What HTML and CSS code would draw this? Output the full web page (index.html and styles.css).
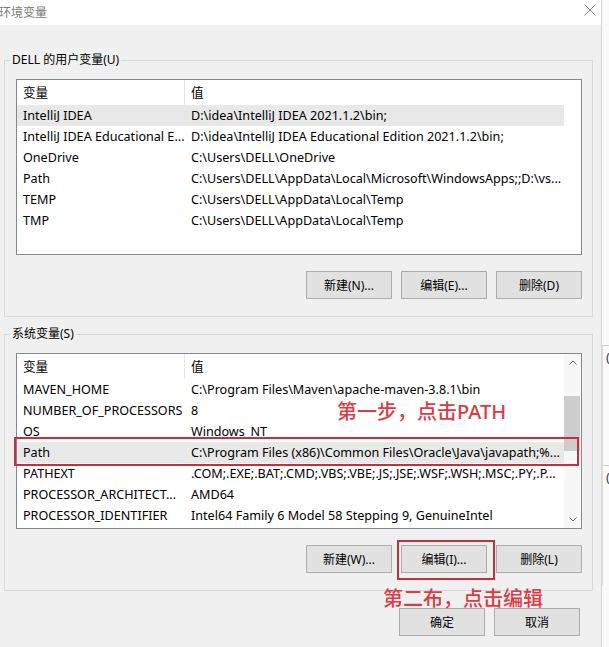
FILE: index.html
```html
<!DOCTYPE html>
<html lang="zh-CN">
<head>
    <meta charset="UTF-8">
    <meta name="viewport" content="width=device-width, initial-scale=1.0">
    <title>环境变量</title>
    <link rel="stylesheet" href="styles.css">
</head>
<body>
    <div class="screen">
        <div class="dialog">
            <div class="titlebar">
                <span class="title">环境变量</span>
                <svg class="close" width="12" height="12" viewBox="0 0 12 12">
                    <path d="M0.5 0.5 L11.5 11.5 M11.5 0.5 L0.5 11.5" stroke="#8a8a8a" stroke-width="1" fill="none"/>
                </svg>
            </div>

            <div class="dialog-body">
                <fieldset class="group">
                    <legend>DELL 的用户变量(U)</legend>
                    <div class="listview">
                        <div class="list-main">
                            <div class="list-head">
                                <div class="col-name">变量</div>
                                <div class="col-value">值</div>
                            </div>
                            <div class="list-row selected">
                                <div class="col-name">IntelliJ IDEA</div>
                                <div class="col-value">D:\idea\IntelliJ IDEA 2021.1.2\bin;</div>
                            </div>
                            <div class="list-row">
                                <div class="col-name">IntelliJ IDEA Educational E...</div>
                                <div class="col-value">D:\idea\IntelliJ IDEA Educational Edition 2021.1.2\bin;</div>
                            </div>
                            <div class="list-row">
                                <div class="col-name">OneDrive</div>
                                <div class="col-value">C:\Users\DELL\OneDrive</div>
                            </div>
                            <div class="list-row">
                                <div class="col-name">Path</div>
                                <div class="col-value">C:\Users\DELL\AppData\Local\Microsoft\WindowsApps;;D:\vs...</div>
                            </div>
                            <div class="list-row">
                                <div class="col-name">TEMP</div>
                                <div class="col-value">C:\Users\DELL\AppData\Local\Temp</div>
                            </div>
                            <div class="list-row">
                                <div class="col-name">TMP</div>
                                <div class="col-value">C:\Users\DELL\AppData\Local\Temp</div>
                            </div>
                        </div>
                        <div class="scroll-gap"></div>
                    </div>
                    <div class="button-row">
                        <button>新建(N)...</button>
                        <button>编辑(E)...</button>
                        <button>删除(D)</button>
                    </div>
                </fieldset>

                <fieldset class="group">
                    <legend>系统变量(S)</legend>
                    <div class="listview">
                        <div class="list-main">
                            <div class="list-head">
                                <div class="col-name">变量</div>
                                <div class="col-value">值</div>
                            </div>
                            <div class="list-row">
                                <div class="col-name">MAVEN_HOME</div>
                                <div class="col-value">C:\Program Files\Maven\apache-maven-3.8.1\bin</div>
                            </div>
                            <div class="list-row">
                                <div class="col-name">NUMBER_OF_PROCESSORS</div>
                                <div class="col-value">8</div>
                            </div>
                            <div class="list-row">
                                <div class="col-name">OS</div>
                                <div class="col-value">Windows_NT</div>
                            </div>
                            <div class="list-row selected">
                                <div class="col-name">Path</div>
                                <div class="col-value">C:\Program Files (x86)\Common Files\Oracle\Java\javapath;%...</div>
                            </div>
                            <div class="list-row">
                                <div class="col-name">PATHEXT</div>
                                <div class="col-value">.COM;.EXE;.BAT;.CMD;.VBS;.VBE;.JS;.JSE;.WSF;.WSH;.MSC;.PY;.P...</div>
                            </div>
                            <div class="list-row">
                                <div class="col-name">PROCESSOR_ARCHITECT...</div>
                                <div class="col-value">AMD64</div>
                            </div>
                            <div class="list-row">
                                <div class="col-name">PROCESSOR_IDENTIFIER</div>
                                <div class="col-value">Intel64 Family 6 Model 58 Stepping 9, GenuineIntel</div>
                            </div>
                        </div>
                        <div class="scrollbar">
                            <div class="scroll-btn">
                                <svg width="8" height="5" viewBox="0 0 8 5"><path d="M0.5 4.5 L4 1 L7.5 4.5" stroke="#606060" fill="none"/></svg>
                            </div>
                            <div class="scroll-track"><div class="scroll-thumb"></div></div>
                            <div class="scroll-btn">
                                <svg width="8" height="5" viewBox="0 0 8 5"><path d="M0.5 0.5 L4 4 L7.5 0.5" stroke="#606060" fill="none"/></svg>
                            </div>
                        </div>
                    </div>
                    <div class="button-row">
                        <button>新建(W)...</button>
                        <button>编辑(I)...</button>
                        <button>删除(L)</button>
                    </div>
                </fieldset>

                <div class="dialog-buttons">
                    <button>确定</button>
                    <button>取消</button>
                </div>

                <!-- 标注 -->
                <div class="mark mark-path"></div>
                <div class="mark mark-edit"></div>
                <div class="note note-one">第一步，点击PATH</div>
                <div class="note note-two">第二布，点击编辑</div>
            </div>
        </div>
        <div class="side">
            <div class="side-item">(</div>
            <div class="side-item">(</div>
        </div>
    </div>
</body>
</html>
```

FILE: styles.css
```css
* {
    margin: 0;
    padding: 0;
    box-sizing: border-box;
}

body {
    width: 609px;
    height: 647px;
    overflow: hidden;
    background: #f0f0f0;
    font-family: "Noto Sans", "Noto Sans CJK SC", sans-serif;
    font-size: 12px;
    color: #000;
}

.screen {
    display: flex;
    height: 647px;
}

.dialog {
    width: 602px;
    flex: none;
    background: #f0f0f0;
    border-right: 1px solid #d6d6d6;
}

.titlebar {
    height: 25px;
    background: #fff;
    display: flex;
    align-items: center;
    justify-content: space-between;
    padding: 0 5px 2px 0;
}

.title {
    color: #7a7a7a;
    font-size: 12px;
    margin-left: -1px;
}

.close {
    margin-top: -4px;
}

.dialog-body {
    position: relative;
    padding-top: 27px;
}

.group {
    margin-left: 4px;
    width: 589px;
    border: 1px solid #d9d9d9;
    padding: 11px 10px 17px 11px;
    margin-bottom: 9px;
}

.group legend {
    margin-left: -6px;
    padding: 0 2px;
    line-height: 16px;
    font-size: 12px;
}

.listview {
    height: 176px;
    background: #fff;
    border: 1px solid #828790;
    display: flex;
    font-size: 12.6px;
}

.list-main {
    flex: 1;
    min-width: 0;
}

.list-head,
.list-row {
    display: flex;
    white-space: nowrap;
}

.list-head {
    height: 25px;
    line-height: 25px;
}

.list-head .col-name {
    border-right: 1px solid #e5e5e5;
}

.list-row {
    height: 21px;
    line-height: 21px;
}

.list-row.selected {
    background: #e8e8e8;
}

.col-name {
    width: 168px;
    flex: none;
    padding-left: 6px;
    overflow: hidden;
}

.col-value {
    flex: 1;
    padding-left: 6px;
    overflow: hidden;
}

.scroll-gap {
    width: 17px;
    flex: none;
}

.scrollbar {
    width: 17px;
    flex: none;
    background: #f7f7f7;
    display: flex;
    flex-direction: column;
}

.scroll-btn {
    height: 17px;
    display: flex;
    align-items: center;
    justify-content: center;
}

.scroll-track {
    flex: 1;
    padding: 25px 1px 0 0;
}

.scroll-thumb {
    height: 55px;
    background: #cdcdcd;
}

.button-row,
.dialog-buttons {
    display: flex;
    justify-content: flex-end;
    gap: 9px;
}

.button-row {
    margin-top: 16px;
}

.dialog-buttons {
    margin-top: 17px;
    padding-right: 21px;
}

button {
    width: 86px;
    height: 28px;
    background: #e1e1e1;
    border: 1px solid #adadad;
    font-family: "Noto Sans", "Noto Sans CJK SC", sans-serif;
    font-size: 12px;
    color: #000;
}

.mark {
    position: absolute;
    border: 2px solid #c4313b;
}

.mark-path {
    left: 14px;
    top: 412px;
    width: 565px;
    height: 29px;
}

.mark-edit {
    left: 397px;
    top: 515px;
    width: 98px;
    height: 40px;
}

.note {
    position: absolute;
    color: #dd3a44;
    font-size: 20px;
    font-weight: 500;
    line-height: 26px;
    white-space: nowrap;
}

.note-one {
    left: 337px;
    top: 374px;
}

.note-two {
    left: 383px;
    top: 561px;
}

.side {
    flex: 1;
    background: #fafafa;
    padding-top: 345px;
}

.side-item {
    height: 120px;
    border-top: 1px solid #cfcfcf;
    border-left: 1px solid #dcdcdc;
    color: #444;
    font-size: 13px;
    line-height: 22px;
    padding-left: 3px;
}
```
